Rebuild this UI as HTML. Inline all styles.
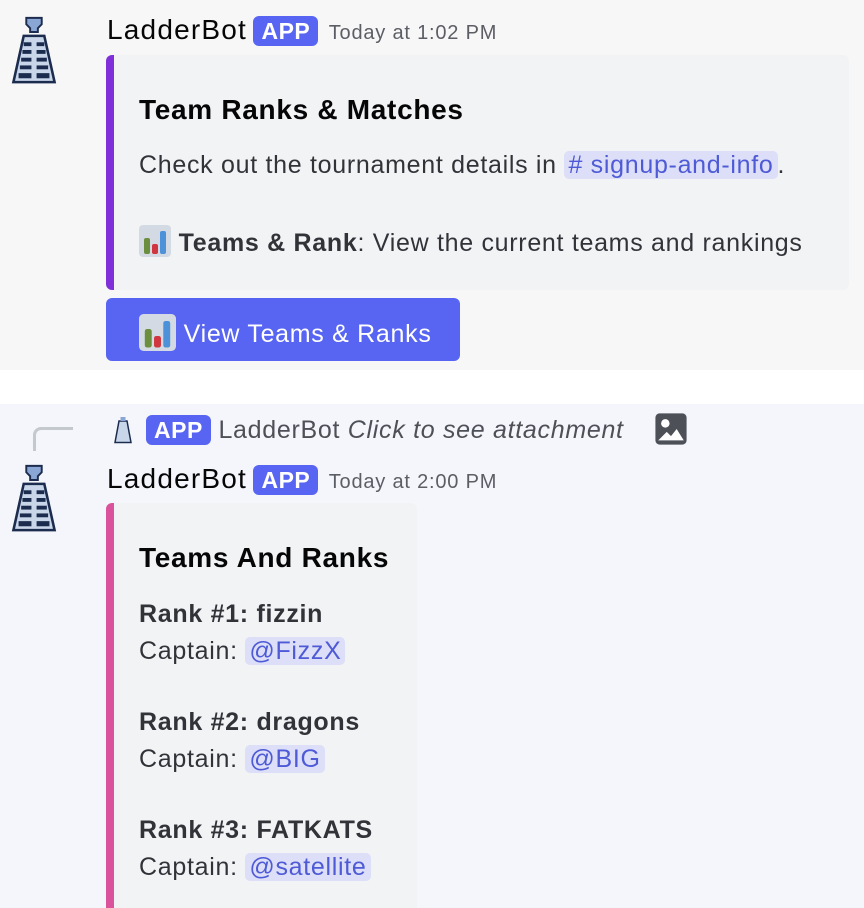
<!DOCTYPE html>
<html style="overflow:hidden;height:908px"><head><style>
*{margin:0;padding:0;box-sizing:border-box}
body{width:864px;height:908px;overflow:hidden;background:#fff;font-family:"Liberation Sans",sans-serif;color:#313338;position:relative}
.abs{position:absolute;white-space:nowrap}
.top{position:absolute;left:0;top:0;width:864px;height:370px;background:#f7f7f7}
.bot{position:absolute;left:0;top:404px;width:864px;height:504px;background:#f5f6fb}
.name{font-size:28px;color:#060607;letter-spacing:1.2px}
.app{display:inline-block;background:#5865f2;color:#fff;font-size:23px;font-weight:bold;border-radius:6px;padding:0 8px;line-height:30px;height:30px;letter-spacing:0.5px}
.ts{font-size:20px;color:#5c5e66;letter-spacing:0.8px}
.embed{position:absolute;background:#f2f3f5;border-radius:6px;overflow:hidden}
.bar{position:absolute;left:0;top:0;bottom:0;width:8px}
.t{font-size:25px;line-height:30px;letter-spacing:0.7px}
.b{font-weight:bold}
.m{background:#dcdff7;color:#4e5ad6;border-radius:5px;padding:0 4px}
</style></head><body>
<div class="top"></div>
<div class="bot"></div>

<svg class="abs" style="left:8px;top:14px" width="52" height="72" viewBox="0 0 40 56">
<path d="M14 3h12v5l-3 3v3h-6v-3l-3-3z" fill="#8aa6d4" stroke="#1c2c4e" stroke-width="1.5"/>
<path d="M12 17h16l8 36H4z" fill="#c9d6ea" stroke="#1c2c4e" stroke-width="2"/>
<g fill="#1c2c4e"><rect x="12" y="22" width="6" height="3"/><rect x="22" y="22" width="6" height="3"/><rect x="11" y="28" width="7" height="3"/><rect x="22" y="28" width="7" height="3"/><rect x="10" y="34" width="8" height="3"/><rect x="22" y="34" width="8" height="3"/><rect x="9" y="40" width="9" height="3"/><rect x="22" y="40" width="9" height="3"/><rect x="8" y="46" width="10" height="4"/><rect x="22" y="46" width="10" height="4"/></g>
</svg>

<div class="abs" style="left:107px;top:14px"><span class="name">LadderBot</span> <span class="app" style="margin-left:2px">APP</span> <span class="ts" style="margin-left:6px">Today at 1:02 PM</span></div>

<div class="embed" style="left:106px;top:55px;width:743px;height:235px"><div class="bar" style="background:#8030d8"></div>
<div class="abs t b" style="left:33px;top:40px;font-size:28px;color:#060607">Team Ranks &amp; Matches</div>
<div class="abs t" style="left:33px;top:95px">Check out the tournament details in <span class="m"># signup-and-info</span>.</div>
<div class="abs t" style="left:33px;top:170px"><svg width="32" height="32" viewBox="0 0 32 32" style="vertical-align:-6px"><rect width="32" height="32" rx="4" fill="#d4dae3"/><rect x="5" y="13" width="6" height="16" rx="2" fill="#6b8f3e"/><rect x="13" y="19" width="6" height="10" rx="2" fill="#d0363f"/><rect x="21" y="6" width="6" height="23" rx="2" fill="#4d91d9"/></svg> <span class="b">Teams &amp; Rank</span>: View the current teams and rankings</div>
</div>

<div class="abs" style="left:106px;top:298px;width:354px;height:63px;background:#5865f2;border-radius:6px"></div>
<div class="abs t" style="left:139px;top:314px;color:#fff"><svg width="37" height="37" viewBox="0 0 32 32" style="vertical-align:-9px"><rect width="32" height="32" rx="4" fill="#d4dae3"/><rect x="5" y="13" width="6" height="16" rx="2" fill="#6b8f3e"/><rect x="13" y="19" width="6" height="10" rx="2" fill="#d0363f"/><rect x="21" y="6" width="6" height="23" rx="2" fill="#4d91d9"/></svg> View Teams &amp; Ranks</div>

<div class="abs" style="left:33px;top:427px;width:40px;height:24px;border-left:3px solid #c4c9ce;border-top:3px solid #c4c9ce;border-top-left-radius:8px"></div>
<svg class="abs" style="left:113px;top:416px" width="20" height="28" viewBox="0 0 40 56"><path d="M12 10h16l8 43H4z" fill="#c9d6ea" stroke="#1c2c4e" stroke-width="3"/><rect x="15" y="2" width="10" height="8" fill="#8aa6d4"/></svg>
<div class="abs" style="left:146px;top:415px;font-size:25px;color:#4e5058;letter-spacing:0.7px"><span class="app">APP</span> LadderBot <i>Click to see attachment</i></div>
<svg class="abs" style="left:654px;top:412px" width="34" height="34" viewBox="0 0 24 24"><rect x="1" y="1" width="22" height="22" rx="3" fill="#4e5058"/><circle cx="8" cy="8" r="3" fill="#fff"/><path d="M3 20l6-6 3 3 4-5 5 8z" fill="#fff"/></svg>

<svg class="abs" style="left:8px;top:462px" width="52" height="72" viewBox="0 0 40 56">
<path d="M14 3h12v5l-3 3v3h-6v-3l-3-3z" fill="#8aa6d4" stroke="#1c2c4e" stroke-width="1.5"/>
<path d="M12 17h16l8 36H4z" fill="#c9d6ea" stroke="#1c2c4e" stroke-width="2"/>
<g fill="#1c2c4e"><rect x="12" y="22" width="6" height="3"/><rect x="22" y="22" width="6" height="3"/><rect x="11" y="28" width="7" height="3"/><rect x="22" y="28" width="7" height="3"/><rect x="10" y="34" width="8" height="3"/><rect x="22" y="34" width="8" height="3"/><rect x="9" y="40" width="9" height="3"/><rect x="22" y="40" width="9" height="3"/><rect x="8" y="46" width="10" height="4"/><rect x="22" y="46" width="10" height="4"/></g>
</svg>
<div class="abs" style="left:107px;top:463px"><span class="name">LadderBot</span> <span class="app" style="margin-left:2px">APP</span> <span class="ts" style="margin-left:6px">Today at 2:00 PM</span></div>

<div class="embed" style="left:106px;top:503px;width:311px;height:405px;border-bottom-left-radius:0;border-bottom-right-radius:0"><div class="bar" style="background:#d9529b"></div>
<div class="abs t b" style="left:33px;top:40px;font-size:28px;color:#060607">Teams And Ranks</div>
<div class="abs t b" style="left:33px;top:96px">Rank #1: fizzin</div>
<div class="abs t" style="left:33px;top:133px">Captain: <span class="m">@FizzX</span></div>
<div class="abs t b" style="left:33px;top:204px">Rank #2: dragons</div>
<div class="abs t" style="left:33px;top:241px">Captain: <span class="m">@BIG</span></div>
<div class="abs t b" style="left:33px;top:312px">Rank #3: FATKATS</div>
<div class="abs t" style="left:33px;top:349px">Captain: <span class="m">@satellite</span></div>
</div>
</body></html>
